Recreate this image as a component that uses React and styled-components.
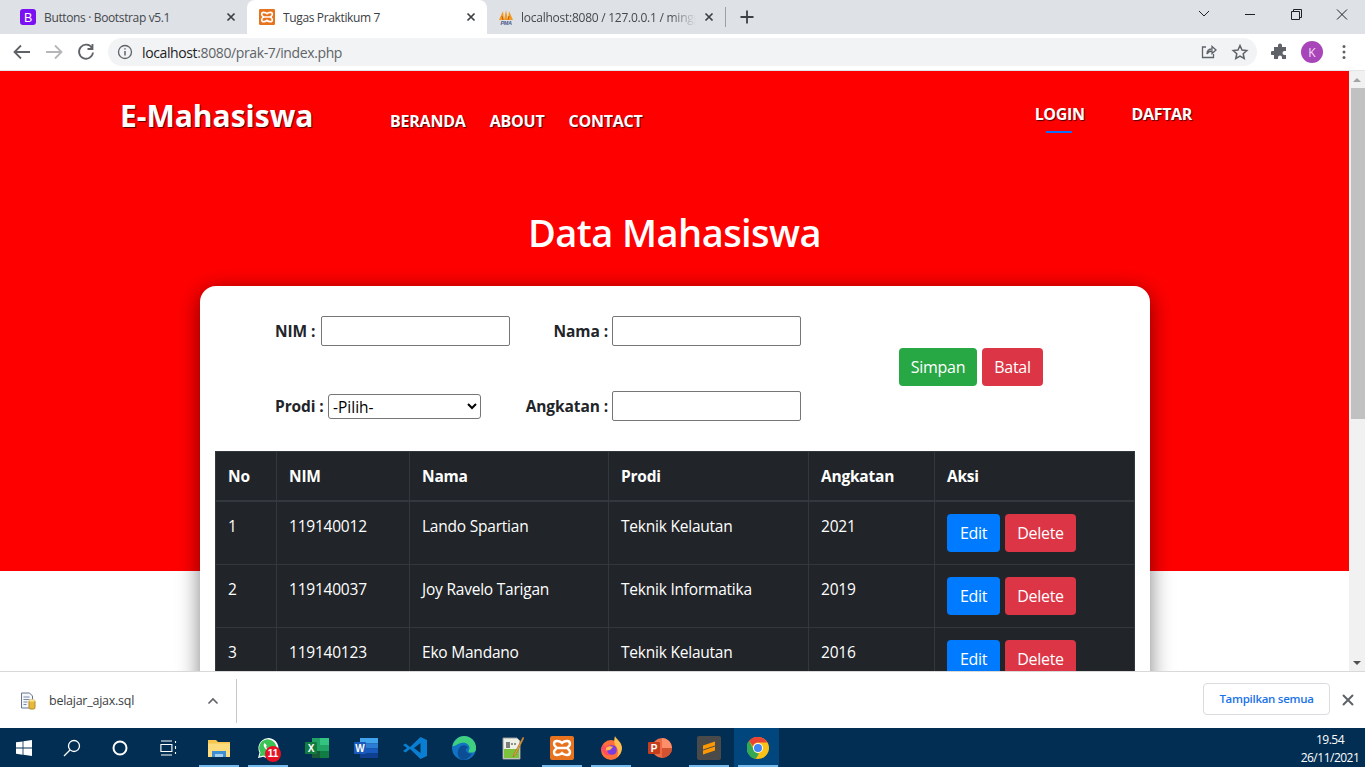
import React from "react";
import styled, { createGlobalStyle } from "styled-components";

const Global = createGlobalStyle`
  html, body { margin: 0; padding: 0; height: 100%; overflow: hidden; background: #fff; }
  * { box-sizing: border-box; }
  body { font-family: "Open Sans", "Noto Sans", "Liberation Sans", sans-serif; color: #212529; }
`;
const sans = `"Open Sans", "Noto Sans", "Liberation Sans", sans-serif`;

const Shell = styled.div`width: 1365px; height: 767px; display: flex; flex-direction: column; overflow: hidden;`;

/* ---------- browser tab strip ---------- */
const TabStrip = styled.div`height: 34px; flex: none; background: #dee1e6; display: flex; align-items: flex-end; padding-left: 8px;`;
const Tab = styled.div`
  width: ${p => p.$w}px; height: 34px; flex: none; display: flex; align-items: center; padding: 0 8px 0 ${p => p.$pl || 12}px; gap: ${p => p.$gap || 8}px;
  background: ${p => p.$active ? "#fff" : "transparent"}; border-radius: 8px 8px 0 0;
  font: 12px ${sans}; letter-spacing: -.36px; color: ${p => p.$active ? "#3c4043" : "#45484c"};
`;
const TabTitle = styled.span`
  flex: 1; white-space: nowrap; overflow: hidden;
  ${p => p.$fade && "mask-image: linear-gradient(90deg, #000 85%, transparent); letter-spacing: -.25px;"}
`;
const TabClose = styled.svg`flex: none; width: 16px; height: 16px; stroke: #3c4043; stroke-width: 1.7; fill: none;`;
const TabDivider = styled.div`width: 1px; height: 20px; background: #9aa0a6; align-self: center;`;
const NewTab = styled.svg`width: 16px; height: 16px; stroke: #3c4043; stroke-width: 1.8; fill: none; align-self: center; margin-left: 13px;`;
const WinControls = styled.div`margin-left: auto; display: flex; align-items: center; align-self: flex-start; height: 28px;`;
const WinBtn = styled.svg`width: 46px; height: 28px; stroke: #202124; stroke-width: 1; fill: none;`;

/* ---------- toolbar ---------- */
const Toolbar = styled.div`height: 37px; flex: none; background: #fff; display: flex; align-items: center; padding-left: 8px; border-bottom: 1px solid #e4e5e7;`;
const NavIcon = styled.svg`width: 28px; height: 28px; flex: none; margin-right: ${p => p.$mr ?? 4}px; fill: none; stroke: ${p => p.$dim ? "#b4b6b9" : "#5f6368"}; stroke-width: 1.8;`;
const Omni = styled.div`
  width: 1149px; height: 28px; flex: none; margin-left: 8px; background: #f1f3f4; border-radius: 14px; display: flex; align-items: center; padding-left: 8px;
  font: 14px ${sans}; letter-spacing: -.38px; color: #5f6368;
`;
const OmniUrl = styled.span`margin-left: 8px; flex: 1; b { font-weight: 400; color: #202124; }`;
const OmniIcon = styled.svg`width: 18px; height: 18px; flex: none; fill: none; stroke: #5f6368; stroke-width: 1.3; margin-right: ${p => p.$mr || 0}px;`;
const Avatar = styled.div`width: 22px; height: 22px; margin-left: 12px; border-radius: 50%; background: #a845b8; color: #f3dff6; font: 12px ${sans}; display: flex; align-items: center; justify-content: center; flex: none;`;
const ToolRight = styled.svg`width: 18px; height: 18px; flex: none; margin-left: ${p => p.$ml}px; fill: #5f6368;`;

/* ---------- page ---------- */
const Viewport = styled.div`flex: 1; min-height: 0; display: flex; overflow: hidden;`;
const Page = styled.div`flex: 1; min-width: 0; overflow: hidden; background: linear-gradient(#f00 500px, #fff 500px);`;
const Scrollbar = styled.div`width: 16px; flex: none; background: #f1f1f1; display: flex; flex-direction: column; align-items: center;`;
const ScrollArrow = styled.div`
  width: 0; height: 0; border-left: 4px solid transparent; border-right: 4px solid transparent;
  ${p => p.$down ? "border-top: 4px solid #505050; margin: auto 0 6px;" : "border-bottom: 4px solid #a3a3a3; margin-top: 7px;"}
`;
const ScrollThumb = styled.div`width: 14px; height: 331px; background: #c1c1c1; margin: 6px 0 0 2px;`;

const shadow = "1px 1px 1px rgba(0,0,0,.7)";
const Nav = styled.nav`display: flex; align-items: flex-start; padding: 24px 0 0 120px; height: 131px; color: #fff; text-shadow: ${shadow};`;
const Brand = styled.div`font: 700 30px/41px ${sans}; letter-spacing: 0; width: 270px; flex: none;`;
const NavLinks = styled.div`display: flex; gap: 24px; margin-top: 15px; font: 700 16px/22px ${sans}; letter-spacing: -.22px;`;
const AuthLinks = styled.div`display: flex; margin-left: auto; margin-right: 157px; gap: 47px; margin-top: 8px; font: 700 16px/22px ${sans}; letter-spacing: -.35px;`;
const ActiveLink = styled.span`display: inline-block; position: relative; &::after { content: ""; position: absolute; left: 11px; right: 13px; bottom: -8px; height: 2px; background: #0d6efd; }`;
const Title = styled.h1`margin: 0; text-align: center; color: #fff; font: 600 38px/60px ${sans}; letter-spacing: -.55px;`;

const Card = styled.div`width: 950px; margin: 24px 0 0 200px; background: #fff; border-radius: 16px; padding: 30px 15px 0; box-shadow: 0 5px 22px rgba(0,0,0,.5); height: 600px;`;
const FormRow = styled.div`display: flex; align-items: center;`;
const FormGrid = styled.div`display: grid; grid-template-columns: 235px 291px; row-gap: 45px; margin-left: 60px;`;
const Field = styled.label`
  display: flex; height: 30px; align-items: center; gap: 4px; padding-right: ${p => p.$pr || 0}px;
  justify-content: ${p => p.$right ? "flex-end" : "space-between"};
  font: 700 15.5px ${sans}; letter-spacing: -.1px; color: #212529;
`;
const TextInput = styled.input`width: 189px; height: 30px; border: 1px solid #767676; border-radius: 2px; background: #fff; padding: 1px 2px; flex: none;`;
const Select = styled.select`width: 153px; height: 25px; flex: none; border: 1px solid #767676; border-radius: 3px; background: #fff; font: 400 15.5px ${sans}; letter-spacing: 0; color: #000; padding: 0;`;
const Actions = styled.div`display: flex; gap: 5px; margin-left: 98px; margin-top: -3px;`;
const Btn = styled.button`
  height: 38px; padding: 0; width: ${p => p.$w}px; border: 0; border-radius: 4px; color: #fff; background: ${p => p.$bg};
  font: 400 16px ${sans}; letter-spacing: -.3px; flex: none;
`;
const Table = styled.table`width: 919px; margin-top: 30px; border-collapse: collapse; table-layout: fixed; background: #212529; color: #fff; font: 400 15.5px/24px ${sans}; letter-spacing: -.22px;`;
const Col = styled.col`width: ${p => p.$w}px;`;
const Th = styled.th`border: 1px solid #32383e; border-bottom-width: 2px; padding: 12px; height: 49px; text-align: left; font-weight: 700; vertical-align: top;`;
const Td = styled.td`border: 1px solid #32383e; padding: 12px; height: 63px; vertical-align: top;`;
const RowBtns = styled.div`display: flex; gap: 5px;`;

/* ---------- download shelf ---------- */
const Shelf = styled.div`height: 57px; flex: none; background: #fff; border-top: 1px solid #d9d9d9; display: flex; align-items: center;`;
const DownloadItem = styled.div`width: 237px; height: 44px; margin-top: 2px; border-right: 1px solid #c8c8c8; display: flex; align-items: center; padding-left: 20px; font: 12.5px ${sans}; letter-spacing: -.25px; color: #3c4043;`;
const FileName = styled.span`margin: 0 0 2px 13px; flex: 1;`;
const ShowAll = styled.button`
  margin: 0 0 2px auto; width: 127px; height: 32px; background: #fff; border: 1px solid #dadce0; border-radius: 4px; color: #1a73e8; font: 600 11.5px ${sans}; letter-spacing: -.28px; padding: 0 0 2px;
`;
const ShelfClose = styled.svg`width: 16px; height: 16px; margin: 0 9px 0 10px; stroke: #5f6368; stroke-width: 2; fill: none;`;

/* ---------- taskbar ---------- */
const Taskbar = styled.div`height: 39px; flex: none; background: #012e52; display: flex; align-items: stretch;`;
const SysSlot = styled.div`width: 48px; flex: none; display: flex; align-items: center; justify-content: center;`;
const AppSlot = styled.div`
  width: 49px; flex: none; display: flex; align-items: center; justify-content: center; position: relative;
  ${p => p.$active && "background: linear-gradient(90deg, transparent 1px, #01467c 1px, #01467c 46px, transparent 46px);"}
  ${p => p.$open && `&::after { content: ""; position: absolute; left: 5px; width: 40px; bottom: 0; height: 2px; background: #76b9ed; }`}
`;
const AppGap = styled.div`width: 2px; flex: none;`;
const Clock = styled.div`margin-left: auto; width: 62px; margin-right: 4px; padding-top: 3px; text-align: center; color: #fff; font: 12px/18px ${sans}; letter-spacing: -.5px;`;
const Badge = styled.span`position: absolute; left: 22px; top: 18px; width: 16px; height: 16px; border-radius: 50%; background: #e81123; color: #fff; font: 700 10px/16px "Liberation Sans", sans-serif; text-align: center;`;
const Ico = styled.svg`display: block; flex: none; margin-right: ${p => p.$mr || 0}px;`;
const IconLabel = styled.text`font-family: "Liberation Sans", sans-serif; font-weight: ${p => p.$w || 700};`;

const X = () => <path d="M4.5 4.5l7 7M11.5 4.5l-7 7" />;

const FavB = () => <Ico width="16" height="16" viewBox="0 0 16 16"><rect width="16" height="16" rx="3" fill="#7b10f2" /><IconLabel $w={400} x="8" y="12.6" fontSize="12.5" textAnchor="middle" fill="#fff">B</IconLabel></Ico>;
const Xampp = ({ s = 16 }) => (
  <Ico width={s} height={s} viewBox="0 0 24 24">
    <rect width="24" height="24" rx="2" fill="#e8731f" />
    <path d="M7 5C9 5 10.5 5.5 12 7C13.5 5.5 15 5 17 5C19 5 20 6.5 20 8C20 10 18 11 17 12C18 13 20 14 20 16C20 17.5 19 19 17 19C15 19 13.5 18.500 12 17C10.500 18.500 9 19 7 19C5 19 4 17.500 4 16C4 14 6 13 7 12C6 11 4 10 4 8C4 6.500 5 5 7 5ZM7.500 12H16.500" fill="none" stroke="#fff" strokeWidth="2.400" />
  </Ico>
);
const Pma = () => <Ico width="20" height="18" viewBox="0 0 20 18"><path d="M3 12L7 3l1 9zM8 12l2-10 2 10zM12 12l1-9 4 9z" fill="#f39a1e" /><path d="M6 8l1 4M13 8l-1 4" stroke="#c65c0d" /><IconLabel x="10" y="17" fontSize="5.500" textAnchor="middle" fill="#4a5a8c" fontStyle="italic">PMA</IconLabel></Ico>;
const FileIcon = () => <Ico width="16" height="18" viewBox="0 0 16 18"><path d="M1.500 1h8l3 3v12h-11z" fill="#f4f6fa" stroke="#68748c" /><path d="M3.500 5h6M3.500 7.500h6M3.500 10h4M3.500 12.500h3" stroke="#7a8aa8" /><rect x="9" y="8" width="6" height="9" rx="1.500" fill="#e8b83c" stroke="#ad8a28" /><ellipse cx="12" cy="8.500" rx="3" ry="1.200" fill="#f7e08a" /></Ico>;

const WinLogo = () => <Ico width="16" height="16" viewBox="0 0 16 16"><path d="M0 2.300l6.600-.9v6.200H0zM7.400 1.300L16 0v7.600H7.400zM0 8.400h6.600v6.300L0 13.800zM7.400 8.400H16V16l-8.600-1.200z" fill="#fff" /></Ico>;
const Search = () => <Ico width="18" height="18" viewBox="0 0 18 18" fill="none" stroke="#fff" strokeWidth="1.300"><circle cx="11" cy="7" r="5.500" /><path d="M7 11l-6 6" /></Ico>;
const Cortana = () => <Ico width="16" height="16" viewBox="0 0 16 16" fill="none" stroke="#fff" strokeWidth="2"><circle cx="8" cy="8" r="6.500" /></Ico>;
const TaskView = () => <Ico width="17" height="16" viewBox="0 0 17 16" fill="none" stroke="#fff" strokeWidth="1.100"><path d="M1 1h11M1 15h11M.9 4.500h11v7H.9zM15.500 1v2M15.500 6v3M15.500 12v2" /></Ico>;
const Folder = () => <Ico width="22" height="20" viewBox="0 0 22 20"><path d="M0 2h8l2 2h12v15H0z" fill="#f6c64f" /><path d="M0 5.500h22V19H0z" fill="#fcdc7c" /><path d="M4 13h14v6h-3v-3H7v3H4z" fill="#3d8fd3" /><path d="M7 16h8v3H7z" fill="#a8cdea" /></Ico>;
const Whatsapp = () => <Ico width="22" height="22" viewBox="0 0 22 22"><path d="M1 21l1.500-5.400A10 10 0 1 1 6.300 19.700z" fill="#fff" /><path d="M2.500 19.500l1-3.900A8.600 8.600 0 1 1 6.600 18.500z" fill="#3bc355" /><path d="M7.500 6c-1.500 1.500-.8 4 1.200 6s4.400 3 6 1.500l-2-2-1.200.8c-1-.5-2-1.500-2.500-2.500l.8-1.200z" fill="#fff" /></Ico>;
const Excel = () => <Ico width="24" height="22" viewBox="0 0 24 22"><path d="M7 1h17v20H7z" fill="#21a366" /><path d="M15 1h9v7h-9z" fill="#33c481" /><path d="M7 14h8v7H7z" fill="#185c37" /><path d="M15 14h9v7h-9z" fill="#107c41" /><rect x="0" y="5" width="12" height="12" rx="1" fill="#107c41" /><IconLabel x="6" y="14.500" fontSize="10" textAnchor="middle" fill="#fff">X</IconLabel></Ico>;
const Word = () => <Ico width="24" height="22" viewBox="0 0 24 22"><rect x="6" y="1" width="18" height="5.500" fill="#41a5ee" /><rect x="6" y="6.500" width="18" height="5" fill="#2b7cd3" /><rect x="6" y="11.500" width="18" height="5" fill="#185abd" /><rect x="6" y="16.500" width="18" height="4.500" fill="#103f91" /><rect x="0" y="5" width="12" height="12" rx="1" fill="#185abd" /><IconLabel x="6" y="14.500" fontSize="10" textAnchor="middle" fill="#fff">W</IconLabel></Ico>;
const VSCode = () => <Ico width="24" height="24" viewBox="0 0 24 24"><path d="M17.500 1L24 4v16l-6.500 3L7 13l-4.500 3.500L0 15l4-3-4-3 2.500-1.500L7 11z" fill="#0a7fd1" /><path d="M17.500 7v10L11 12z" fill="#012e52" /></Ico>;
const Edge = () => <Ico width="24" height="24" viewBox="0 0 24 24"><circle cx="12" cy="12" r="12" fill="#1273c4" /><path d="M12 0a12 12 0 0 1 12 13c0 3-3 4-6 3.500-3-.5 0-3-.5-5C17 8 13 6 9 7 5 8 2 11 .5 10 2 4 7 0 12 0z" fill="#3ed07e" /><path d="M9 10c3-2 7 0 7 2-3 0-3 3 0 5 1.500 1 3 .5 4 .2A12 12 0 0 1 11 24c-4-1-6-5-5-9 .3-2 1.500-4 3-5z" fill="#0c4e96" /></Ico>;
const Notepad = () => <Ico width="22" height="24" viewBox="0 0 22 24"><path d="M1 2h14l3 3v18H1z" fill="#edf0e4" stroke="#999" /><path d="M2 13h15v9H2z" fill="#7cc23c" /><path d="M5 6v6M7 6v6M9 8h2M12 8h2" stroke="#333" strokeWidth="1.200" /><path d="M21 1L12 18l-1 3 2.500-2L22 2z" fill="#e8a83c" stroke="#a5632a" strokeWidth=".6" /></Ico>;
const Firefox = () => <Ico width="24" height="24" viewBox="0 0 24 24"><circle cx="12" cy="14" r="10" fill="#ff7139" /><path d="M16 0c1 3 7 6 7 12 0 4-2 7-5 9 2-4 1-9-2-12-1-3-1-6 0-9z" fill="#ffbd4f" /><path d="M2 14c0-3 2-5 3-6l1 3c2-2 5-3 7-2 4 2 4 7 1 9s-8 2-9-1z" fill="#ff4f5e" /><circle cx="13" cy="14" r="4.800" fill="#7a3ee0" /><path d="M7 12c2-2 5-2 7-1l-3 3-4 .5z" fill="#ffbd4f" /></Ico>;
const Ppt = () => <Ico width="24" height="22" viewBox="0 0 24 22"><circle cx="14" cy="11" r="10" fill="#ed6c47" /><path d="M14 1a10 10 0 0 1 10 10H14z" fill="#ff8f6b" /><path d="M14 11h10a10 10 0 0 1-10 10z" fill="#d35230" /><rect x="0" y="5" width="12" height="12" rx="1" fill="#c43e1c" /><IconLabel x="6" y="14.500" fontSize="10" textAnchor="middle" fill="#fff">P</IconLabel></Ico>;
const Sublime = () => <Ico width="24" height="24" viewBox="0 0 24 24"><rect width="24" height="24" rx="2" fill="#4a4a4a" /><path d="M6 9.500L18 5.500v4L6 13.500zM6 14.500l12-4v4L6 18.500z" fill="#ff9800" /></Ico>;
const Chrome = () => <Ico width="22" height="22" viewBox="0 0 22 22"><circle cx="11" cy="11" r="11" fill="#fbc116" /><path d="M11 0a11 11 0 0 1 9.500 5.500H11a5.500 5.500 0 0 0-5.200 3.700L2 3.800A11 11 0 0 1 11 0z" fill="#ea4335" /><path d="M2 3.800l4.800 8.600A5.500 5.500 0 0 0 12 16.400L8.800 21.800A11 11 0 0 1 2 3.800z" fill="#34a853" /><circle cx="11" cy="11" r="5" fill="#fff" /><circle cx="11" cy="11" r="4" fill="#4285f4" /></Ico>;

const rows = [
  ["1", "119140012", "Lando Spartian", "Teknik Kelautan", "2021"],
  ["2", "119140037", "Joy Ravelo Tarigan", "Teknik Informatika", "2019"],
  ["3", "119140123", "Eko Mandano", "Teknik Kelautan", "2016"],
];

export default function App() {
  return (
    <Shell>
      <Global />
      <TabStrip>
        <Tab $w={239}><FavB /><TabTitle>Buttons · Bootstrap v5.1</TabTitle><TabClose viewBox="0 0 16 16"><X /></TabClose></Tab>
        <Tab $w={240} $active><Xampp /><TabTitle>Tugas Praktikum 7</TabTitle><TabClose viewBox="0 0 16 16"><X /></TabClose></Tab>
        <Tab $w={238} $pl={9} $gap={5}><Pma /><TabTitle $fade>localhost:8080 / 127.0.0.1 / mingg</TabTitle><TabClose viewBox="0 0 16 16"><X /></TabClose></Tab>
        <TabDivider />
        <NewTab viewBox="0 0 16 16"><path d="M8 1.500v13M1.500 8h13" /></NewTab>
        <WinControls>
          <WinBtn viewBox="0 0 46 28"><path d="M18 11l5 5 5-5" /></WinBtn>
          <WinBtn viewBox="0 0 46 28"><path d="M18 14.500h10" /></WinBtn>
          <WinBtn viewBox="0 0 46 28"><path d="M18.500 11.500h8v8h-8zM20.500 11.500v-2h8v8h-2" /></WinBtn>
          <WinBtn viewBox="0 0 46 28"><path d="M18 9.500l10 10M28 9.500l-10 10" /></WinBtn>
        </WinControls>
      </TabStrip>
      <Toolbar>
        <NavIcon viewBox="0 0 28 28" $mr={4}><path d="M22 14H7M13 7.500L6.500 14l6.500 6.500" /></NavIcon>
        <NavIcon viewBox="0 0 28 28" $dim $mr={4}><path d="M6 14h15M15 7.500l6.500 6.500-6.500 6.500" /></NavIcon>
        <NavIcon viewBox="0 0 28 28" $mr={0}><path d="M20 10a7 7 0 1 0 1 4.500M20.500 6v5h-5" /></NavIcon>
        <Omni>
          <OmniIcon viewBox="0 0 18 18"><circle cx="9" cy="9" r="6.500" /><path d="M9 8v4.500M9 5.200v1.400" strokeWidth="1.500" /></OmniIcon>
          <OmniUrl><b>localhost</b>:8080/prak-7/index.php</OmniUrl>
          <OmniIcon viewBox="0 0 18 18" $mr={14}><path d="M7 4H3.500v10.500h11V11M8 11c0-3 2-5 5-5V3.500L17 7l-4 3.500V8c-2 0-4 1-5 3z" /></OmniIcon>
          <OmniIcon viewBox="0 0 18 18" $mr={8}><path d="M9 2.500l2 4.500 4.800.5-3.600 3.200 1 4.800L9 13l-4.200 2.500 1-4.800L2.200 7.500 7 7z" strokeWidth="1.500" /></OmniIcon>
        </Omni>
        <ToolRight viewBox="0 0 18 18" $ml={14}><path d="M7 2.500a2 2 0 0 1 4 0V4h4v4h-1.500a2 2 0 0 0 0 4H15v4h-4v-1.500a2 2 0 0 0-4 0V16H3v-4H1.500a2 2 0 0 1 0-4H3V4h4z" /></ToolRight>
        <Avatar>K</Avatar>
        <ToolRight viewBox="0 0 18 18" $ml={12}><circle cx="9" cy="3.500" r="1.500" /><circle cx="9" cy="9" r="1.500" /><circle cx="9" cy="14.500" r="1.500" /></ToolRight>
      </Toolbar>
      <Viewport>
        <Page>
          <Nav>
            <Brand>E-Mahasiswa</Brand>
            <NavLinks><span>BERANDA</span><span>ABOUT</span><span>CONTACT</span></NavLinks>
            <AuthLinks><ActiveLink>LOGIN</ActiveLink><span>DAFTAR</span></AuthLinks>
          </Nav>
          <Title>Data Mahasiswa</Title>
          <Card>
            <FormRow>
              <FormGrid>
                <Field>NIM : <TextInput /></Field>
                <Field $right>Nama : <TextInput /></Field>
                <Field $pr={29}>Prodi : <Select defaultValue="-Pilih-"><option>-Pilih-</option></Select></Field>
                <Field $right>Angkatan : <TextInput /></Field>
              </FormGrid>
              <Actions><Btn $w={78} $bg="#28a745">Simpan</Btn><Btn $w={61} $bg="#dc3545">Batal</Btn></Actions>
            </FormRow>
            <Table>
              <colgroup><Col $w={61} /><Col $w={133} /><Col $w={199} /><Col $w={200} /><Col $w={126} /><Col $w={200} /></colgroup>
              <thead><tr><Th>No</Th><Th>NIM</Th><Th>Nama</Th><Th>Prodi</Th><Th>Angkatan</Th><Th>Aksi</Th></tr></thead>
              <tbody>
                {rows.map(r => (
                  <tr key={r[0]}>
                    {r.map((c, i) => <Td key={i}>{c}</Td>)}
                    <Td><RowBtns><Btn $w={53} $bg="#007bff">Edit</Btn><Btn $w={71} $bg="#dc3545">Delete</Btn></RowBtns></Td>
                  </tr>
                ))}
              </tbody>
            </Table>
          </Card>
        </Page>
        <Scrollbar>
          <ScrollArrow />
          <ScrollThumb />
          <ScrollArrow $down />
        </Scrollbar>
      </Viewport>
      <Shelf>
        <DownloadItem>
          <FileIcon /><FileName>belajar_ajax.sql</FileName>
          <Ico width="12" height="8" viewBox="0 0 12 8" fill="none" stroke="#5f6368" strokeWidth="1.600" $mr={17}><path d="M1.500 6.500L6 2l4.500 4.500" /></Ico>
        </DownloadItem>
        <ShowAll>Tampilkan semua</ShowAll>
        <ShelfClose viewBox="0 0 16 16"><path d="M3 3l10 10M13 3L3 13" /></ShelfClose>
      </Shelf>
      <Taskbar>
        <SysSlot><WinLogo /></SysSlot>
        <SysSlot><Search /></SysSlot>
        <SysSlot><Cortana /></SysSlot>
        <SysSlot><TaskView /></SysSlot>
        <AppGap />
        <AppSlot $open><Folder /></AppSlot>
        <AppSlot $open><Whatsapp /><Badge>11</Badge></AppSlot>
        <AppSlot><Excel /></AppSlot>
        <AppSlot><Word /></AppSlot>
        <AppSlot><VSCode /></AppSlot>
        <AppSlot><Edge /></AppSlot>
        <AppSlot><Notepad /></AppSlot>
        <AppSlot $open><Xampp s={24} /></AppSlot>
        <AppSlot $open><Firefox /></AppSlot>
        <AppSlot><Ppt /></AppSlot>
        <AppSlot $open><Sublime /></AppSlot>
        <AppSlot $open $active><Chrome /></AppSlot>
        <Clock>19.54<br />26/11/2021</Clock>
      </Taskbar>
    </Shell>
  );
}
